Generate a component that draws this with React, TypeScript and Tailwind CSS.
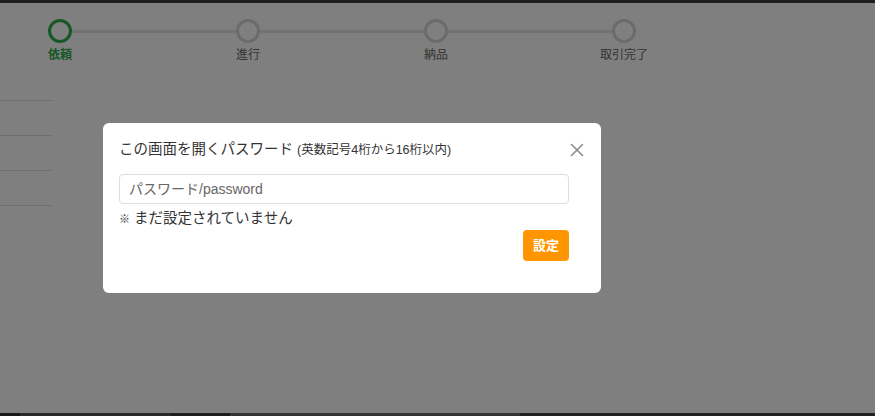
import { X } from "lucide-react";

const STEPS = [
  { label: "依頼", active: true },
  { label: "進行", active: false },
  { label: "納品", active: false },
  { label: "取引完了", active: false },
];

const FONT = { fontFamily: '"Liberation Sans", "Noto Sans CJK JP", sans-serif' };

function Stepper() {
  return (
    <div className="flex items-start pl-[48px] pt-[16px]">
      {STEPS.map((s, i) => (
        <div key={s.label} className="flex items-start">
          <div className="relative flex w-[24px] flex-col items-center">
            <div
              className={`h-[24px] w-[24px] rounded-full border-[3px] bg-white ${
                s.active ? "border-[#2fae4c]" : "border-[#d6d6d6]"
              }`}
            />
            <span
              className={`mt-[4px] whitespace-nowrap text-[12px] leading-[16px] ${
                s.active ? "font-bold text-[#2fae4c]" : "text-[#666]"
              }`}
            >
              {s.label}
            </span>
          </div>
          {i < STEPS.length - 1 && <div className="mt-[11px] h-[3px] w-[164px] bg-[#e4e4e4]" />}
        </div>
      ))}
    </div>
  );
}

function PasswordModal() {
  return (
    <div className="relative flex h-[170px] w-[498px] flex-col rounded-[6px] bg-white pl-[16px] pr-[32px] pt-[17px]">
      <p className="text-[14.5px] leading-[18px] text-[#333]">
        この画面を開くパスワード <span className="text-[12.5px]">(英数記号4桁から16桁以内)</span>
      </p>
      <button className="absolute right-[13px] top-[16px] text-[#888]">
        <X className="h-[22px] w-[22px]" strokeWidth={1.6} />
      </button>
      <input
        className="mt-[15px] h-[30px] w-full rounded-[4px] border border-[#dddddd] px-[9px] text-[14px] text-[#333] outline-none placeholder:text-[#666]"
        placeholder="パスワード/password"
      />
      <p className="mt-[4px] text-[14.5px] leading-[20px] text-[#333]">
        <span className="text-[11px] font-bold">※</span> まだ設定されていません
      </p>
      <div className="mt-[1px] flex justify-end">
        <button className="h-[31px] w-[46px] rounded-[4px] bg-[#ff9500] text-[13px] font-semibold text-white">設定</button>
      </div>
    </div>
  );
}

export default function App() {
  return (
    <div className="relative flex h-[416px] w-[875px] flex-col overflow-hidden bg-white" style={FONT}>
      <div className="h-[3px] bg-[#3c3c3c]" />
      <Stepper />
      <div className="mt-[3px] flex w-[52px] flex-col">
        {[0, 1, 2, 3].map((i) => (
          <div key={i} className="h-[35px] border-b border-[#dddddd]" />
        ))}
      </div>
      <div className="flex-1" />
      <div className="flex h-[3px]">
        <div className="w-[20px] bg-[#333]" />
        <div className="w-[150px] bg-[#555]" />
        <div className="w-[60px] bg-[#3a3a3a]" />
        <div className="w-[290px] bg-[#666]" />
        <div className="flex-1 bg-[#444]" />
      </div>
      <div className="absolute inset-0 bg-black/50 pl-[103px] pt-[123px]">
        <PasswordModal />
      </div>
    </div>
  );
}
